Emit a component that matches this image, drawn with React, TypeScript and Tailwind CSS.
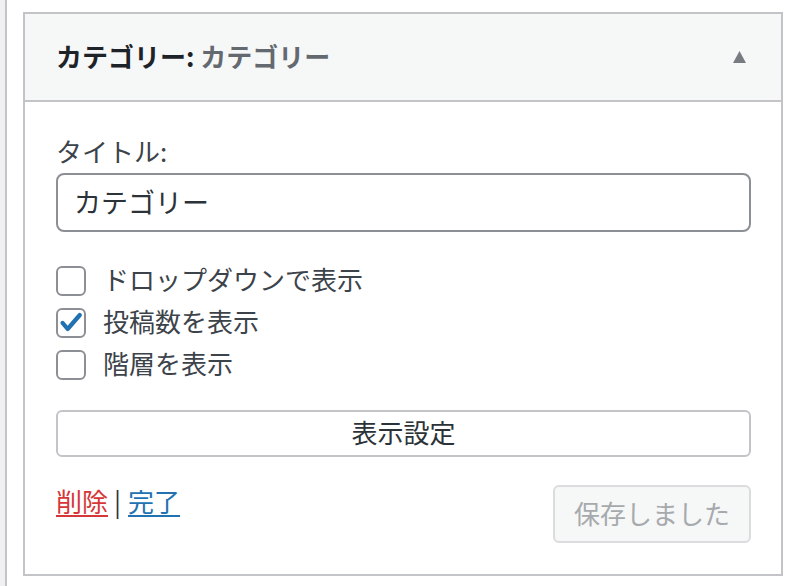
import { useState } from "react";

export default function App() {
  // widget checkbox options
  const [opts, setOpts] = useState([
    { label: "ドロップダウンで表示", checked: false },
    { label: "投稿数を表示", checked: true },
    { label: "階層を表示", checked: false },
  ]);

  const toggle = (i: number) => {
    setOpts(opts.map((o, idx) => (idx === i ? { ...o, checked: !o.checked } : o)));
  };

  return (
    <div
      className="w-[800px] h-[586px] bg-white flex overflow-hidden"
      style={{ fontFamily: '"Noto Sans CJK JP", "Noto Sans", sans-serif' }}
    >
      <div className="w-[5px] h-full bg-[#f0f0f1]"></div>
      <div className="w-[2px] h-full bg-[#c3c4c7]"></div>

      <div className="pl-[16px] pt-[12px]">
        <div className="w-[760px] border-2 border-[#c3c4c7] bg-white">
          {/* header */}
          <div className="h-[88px] bg-[#f6f7f7] border-b-2 border-[#c3c4c7] flex items-center justify-between pl-[31px] pr-[35px]">
            <div className="text-[26px] leading-[36px] font-bold text-[#1d2327] mb-[3px]">
              カテゴリー:{" "}
              <span className="text-[#646970]">カテゴリー</span>
            </div>
            <svg width="13" height="12" viewBox="0 0 13 12">
              <polygon points="6.5,0 13,12 0,12" fill="#787c82" />
            </svg>
          </div>

          {/* body */}
          <div className="pt-[31px] pb-[31px] pl-[31px] pr-[30px] text-[#2c3338]">
            <div className="text-[26px] leading-[36px] text-[#3c434a]">タイトル:</div>
            <input
              type="text"
              defaultValue="カテゴリー"
              className="mt-[4px] w-full h-[59px] border-2 border-[#8c8f94] rounded-[8px] px-[16px] pb-[3px] text-[27px] text-[#2c3338] outline-none"
            />

            <div className="mt-[28px] flex flex-col">
              {opts.map((o, i) => (
                <label key={i} className="h-[42px] flex items-center cursor-pointer" onClick={() => toggle(i)}>
                  <span className="w-[30px] h-[30px] border-2 border-[#8c8f94] rounded-[6px] bg-white flex items-center justify-center shrink-0">
                    {o.checked && (
                      <svg width="30" height="30" viewBox="0 0 30 30" className="-ml-[2px] -mt-[2px]">
                        <path
                          d="M7 16 L12.5 22.5 L25.5 7.5"
                          stroke="#2271b1"
                          strokeWidth="4.5"
                          strokeLinecap="round"
                          strokeLinejoin="round"
                          fill="none"
                        />
                      </svg>
                    )}
                  </span>
                  <span className="ml-[17px] mb-[4px] text-[26px] leading-[36px] text-[#3c434a]">{o.label}</span>
                </label>
              ))}
            </div>

            <button className="mt-[24px] w-full h-[47px] pb-[3px] border-2 border-[#c3c4c7] rounded-[6px] bg-white text-[26px] leading-[36px] text-[#2c3338]">
              表示設定
            </button>

            <div className="mt-[28px] flex items-start justify-between">
              <div className="text-[26px] leading-[36px] text-[#2c3338] flex -mt-[2px]">
                <a href="#" className="text-[#d63638] underline underline-offset-[3px]">削除</a>
                <span className="ml-[6px] mr-[7px]">|</span>
                <a href="#" className="text-[#2271b1] underline underline-offset-[3px]">完了</a>
              </div>
              <button className="w-[198px] h-[58px] pb-[3px] border-2 border-[#dcdcde] rounded-[6px] bg-[#f6f7f7] text-[26px] text-[#a7aaad]">
                保存しました
              </button>
            </div>
          </div>
        </div>
      </div>
    </div>
  );
}
